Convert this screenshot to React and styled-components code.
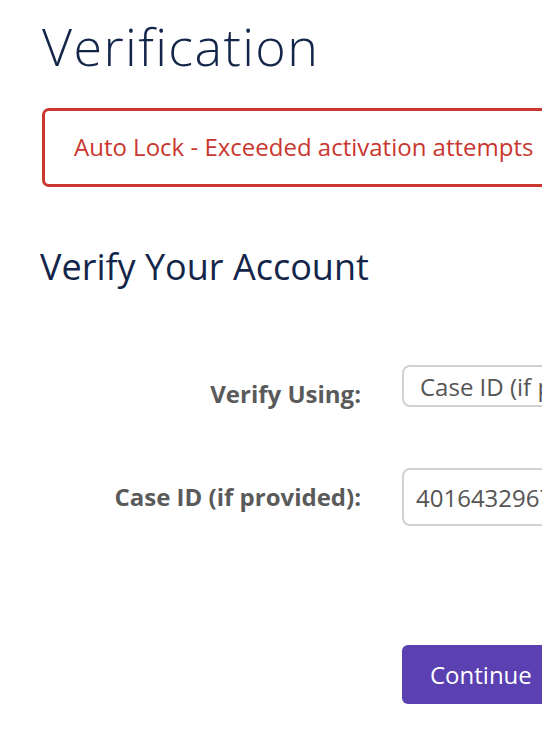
import React from 'react';
import styled, { createGlobalStyle } from 'styled-components';

const GlobalStyle = createGlobalStyle`
  html, body {
    margin: 0;
    padding: 0;
    background: #ffffff;
    overflow: hidden;
  }
  body {
    font-family: "Open Sans", "Liberation Sans", sans-serif;
  }
`;

const Page = styled.div`
  width: 760px;
  padding: 12px 0 0 42px;
  box-sizing: border-box;
`;

const Title = styled.h1`
  margin: 0;
  font-size: 52px;
  font-weight: 300;
  letter-spacing: 1.4px;
  line-height: 68px;
  color: #13264a;
`;

const Alert = styled.div`
  margin-top: 28px;
  height: 79px;
  box-sizing: border-box;
  border: 3px solid #c9372f;
  border-radius: 7px;
  padding: 0 29px 2px;
  display: flex;
  align-items: center;
  color: #c9372f;
  font-size: 24px;
`;

const SectionTitle = styled.h2`
  margin: 56px 0 0 -2px;
  font-size: 36px;
  font-weight: 400;
  line-height: 48px;
  color: #13264a;
`;

const Form = styled.div`
  margin-top: 74px;
  display: grid;
  grid-template-columns: 319px 1fr;
  column-gap: 41px;
  row-gap: 58px;
  align-items: start;
`;

const Label = styled.label`
  justify-self: end;
  padding-top: 12px;
  font-size: 24px;
  line-height: 33px;
  font-weight: 700;
  color: #5a5a5a;
`;

const Field = styled.div`
  height: ${p => p.$height}px;
  box-sizing: border-box;
  border: 2px solid #d2d2d2;
  border-radius: 8px;
  padding: 0 ${p => p.$pad}px;
  display: flex;
  align-items: center;
  font-size: 24px;
  color: #555555;
  white-space: nowrap;
  overflow: hidden;
`;

const Actions = styled.div`
  padding: 119px 0 0 360px;
`;

const Button = styled.button`
  height: 59px;
  padding: 0 28px;
  border: none;
  border-radius: 6px;
  background: #5a40b0;
  color: #ffffff;
  font-family: "Open Sans", "Liberation Sans", sans-serif;
  font-size: 24px;
`;

export default function App() {
  return (
    <Page>
      <GlobalStyle />
      <Title>Verification</Title>
      <Alert>Auto Lock - Exceeded activation attempts</Alert>
      <SectionTitle>Verify Your Account</SectionTitle>
      <Form>
        <Label>Verify Using:</Label>
        <Field $height={42} $pad={16}>Case ID (if provided)</Field>
        <Label>Case ID (if provided):</Label>
        <Field $height={58} $pad={12}>4016432967</Field>
      </Form>
      <Actions>
        <Button>Continue</Button>
      </Actions>
    </Page>
  );
}
